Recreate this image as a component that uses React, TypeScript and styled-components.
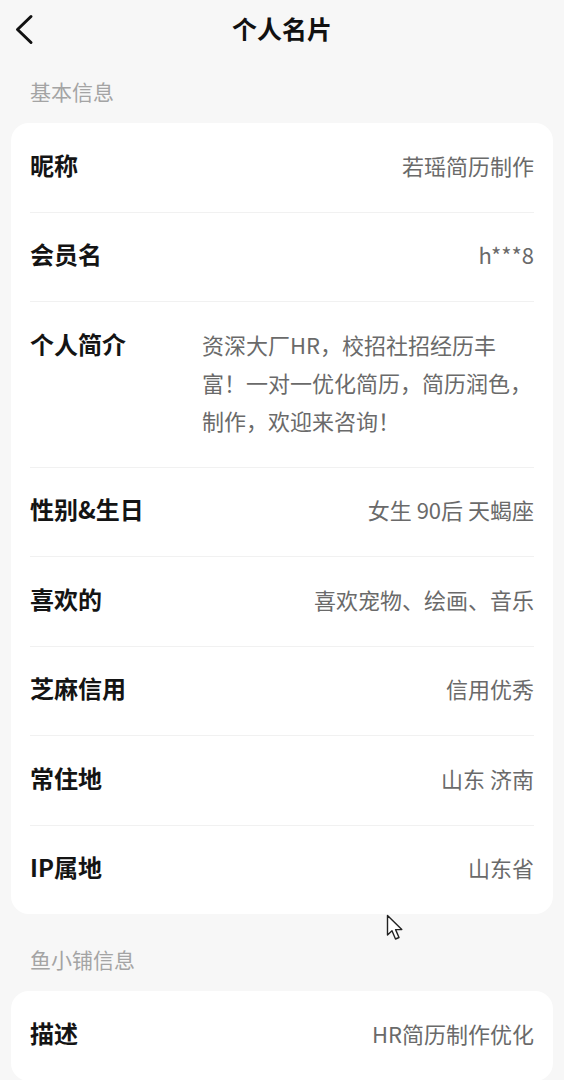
import styled, { createGlobalStyle } from "styled-components"

const GlobalStyle = createGlobalStyle`
    html, body {
        margin: 0;
        padding: 0;
        background: #f7f7f7;
    }
    body {
        font-family: "Noto Sans CJK SC", "Noto Sans", sans-serif;
        -webkit-font-smoothing: antialiased;
    }
`

const Page = styled.div`
    position: relative;
    width: 564px;
    min-height: 1080px;
    padding: 0 11px;
    box-sizing: border-box;
    background: #f7f7f7;
    overflow: hidden;
`

const Header = styled.header`
    height: 60px;
    display: grid;
    grid-template-columns: 60px 1fr 60px;
    align-items: center;
    margin: 0 -11px;
`

const BackButton = styled.button`
    display: flex;
    align-items: center;
    justify-content: center;
    width: 48px;
    height: 60px;
    padding: 0;
    border: 0;
    background: transparent;
    cursor: pointer;
`

const Title = styled.h1`
    margin: 0 0 4px;
    text-align: center;
    font-size: 25px;
    font-weight: 700;
    color: #111;
    line-height: 1;
`

const SectionTitle = styled.h2`
    margin: 0;
    padding: 16px 19px 17px;
    font-size: 21px;
    font-weight: 400;
    line-height: 30px;
    color: #a4a4a4;
`

const Card = styled.section`
    background: #fff;
    border-radius: 18px;
    padding: 0 19px;
    margin-bottom: 14px;
`

const Row = styled.div<{ $divider: boolean }>`
    display: flex;
    align-items: flex-start;
    justify-content: space-between;
    padding: 22.5px 0 28px;
    line-height: 38px;
    border-bottom: ${(p) => (p.$divider ? "1px solid #f1f1f1" : "0")};
`

const Label = styled.span`
    flex-shrink: 0;
    font-size: 24px;
    font-weight: 700;
    color: #141414;
    margin-right: 20px;
`

const Value = styled.span<{ $block?: boolean }>`
    font-size: 22px;
    color: #6a6a6a;
    text-align: ${(p) => (p.$block ? "left" : "right")};
    ${(p) => (p.$block ? "width: 332px; flex-shrink: 0;" : "flex: 1;")}
    word-break: break-all;
    line-break: strict;
`

const Cursor = styled.svg`
    position: absolute;
    left: 386px;
    top: 914px;
    pointer-events: none;
`

const basicInfo = [
    { label: "昵称", value: "若瑶简历制作" },
    { label: "会员名", value: "h***8" },
    { label: "个人简介", value: "资深大厂HR，校招社招经历丰富！一对一优化简历，简历润色，制作，欢迎来咨询！", block: true },
    { label: "性别&生日", value: "女生 90后 天蝎座" },
    { label: "喜欢的", value: "喜欢宠物、绘画、音乐" },
    { label: "芝麻信用", value: "信用优秀" },
    { label: "常住地", value: "山东 济南" },
    { label: "IP属地", value: "山东省" },
]

const shopInfo = [
    { label: "描述", value: "HR简历制作优化" },
]

function InfoCard({ items, lastDivider = false }: { items: { label: string; value: string; block?: boolean }[]; lastDivider?: boolean }) {
    return (
        <Card>
            {items.map((item, i) => (
                <Row key={item.label} $divider={i < items.length - 1 || lastDivider}>
                    <Label>{item.label}</Label>
                    <Value $block={item.block}>{item.value}</Value>
                </Row>
            ))}
        </Card>
    )
}

export default function App() {
    return (
        <>
            <GlobalStyle />
            <Page>
                <Header>
                    <BackButton aria-label="返回">
                        <svg width="20" height="32" viewBox="0 0 20 32" fill="none">
                            <path d="M17 2.5 L3.5 15.5 L17 28.5" stroke="#111" strokeWidth="3" strokeLinecap="round" strokeLinejoin="round" />
                        </svg>
                    </BackButton>
                    <Title>个人名片</Title>
                    <span />
                </Header>

                <SectionTitle>基本信息</SectionTitle>
                <InfoCard items={basicInfo} />

                <SectionTitle>鱼小铺信息</SectionTitle>
                <InfoCard items={shopInfo} lastDivider />

                <Cursor width="19" height="28" viewBox="0 0 19 28">
                    <path d="M1.5 1.5 L1.5 21 L6 16.8 L9.5 25 L13 23.5 L9.6 15.6 L15.8 15.6 Z" fill="#fff" stroke="#222" strokeWidth="1.4" strokeLinejoin="round" />
                </Cursor>
            </Page>
        </>
    )
}
